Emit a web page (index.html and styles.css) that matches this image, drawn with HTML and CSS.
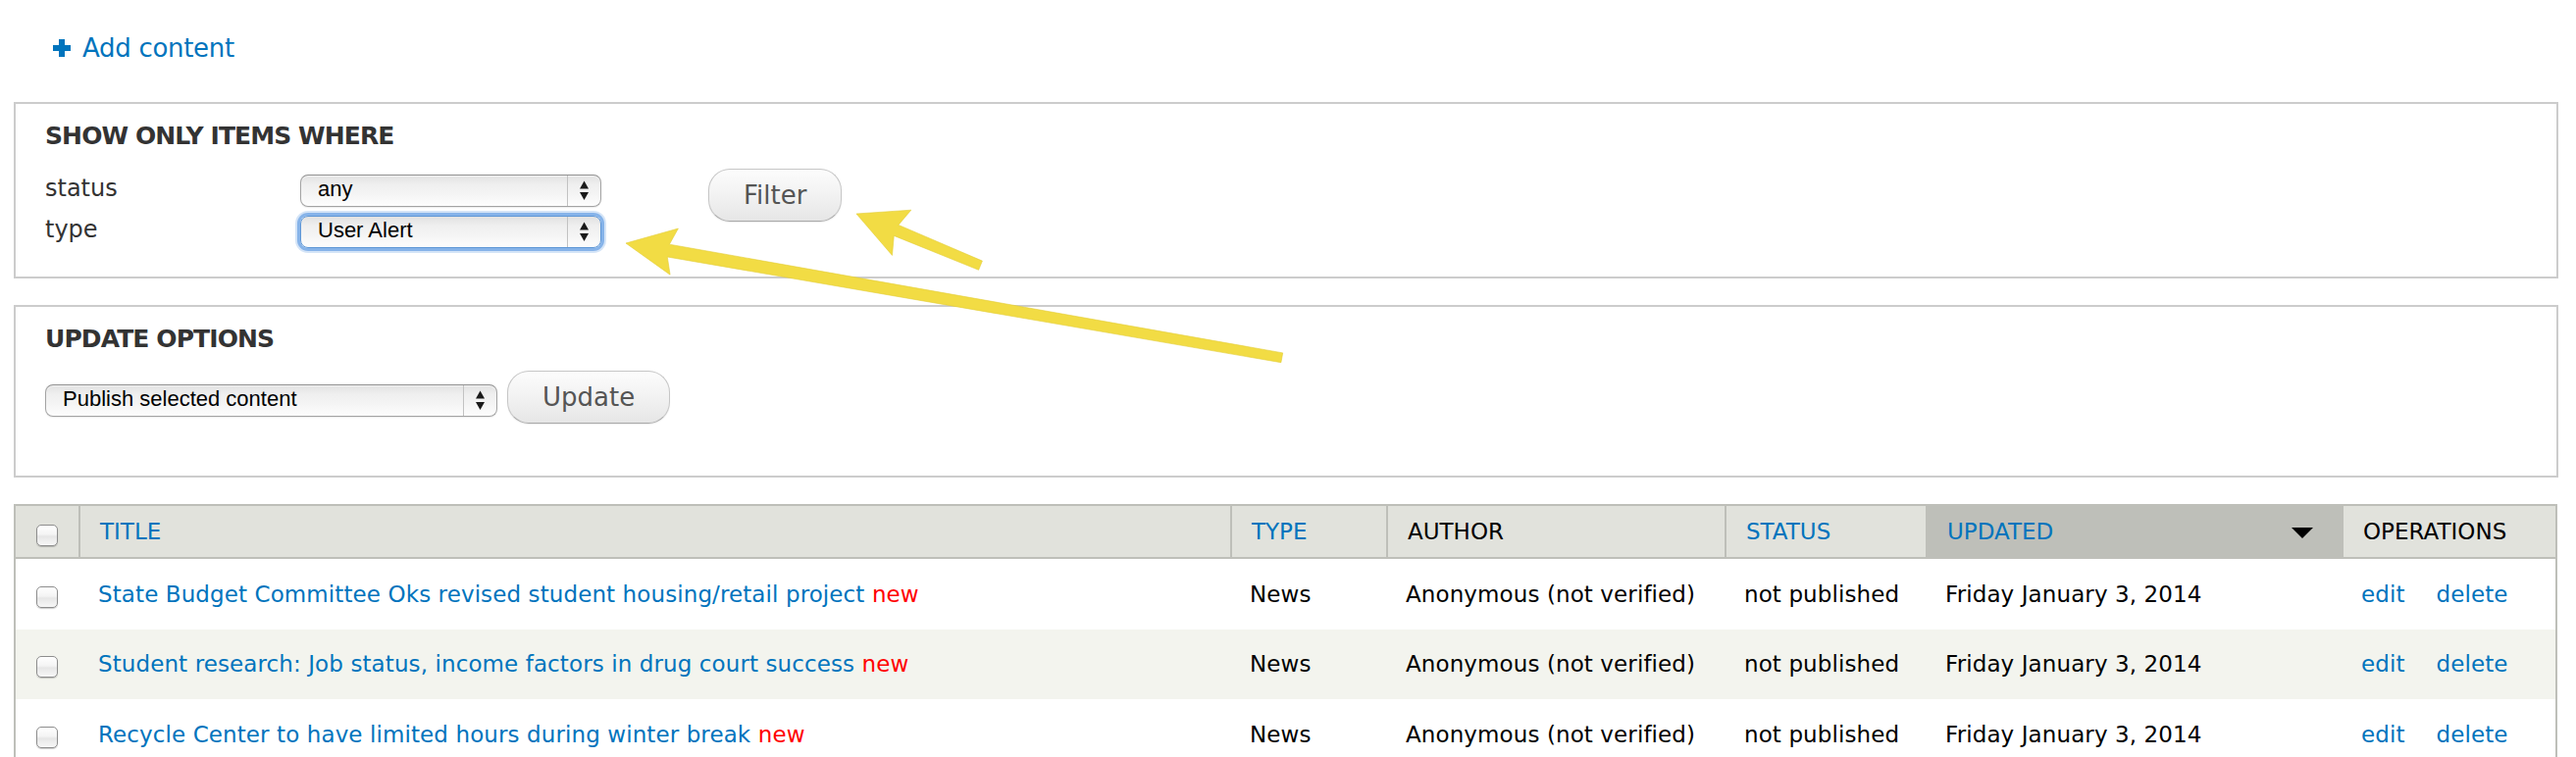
FILE: index.html
```html
<!DOCTYPE html>
<html lang="en">
<head>
<meta charset="utf-8">
<title>Content</title>
<link rel="stylesheet" href="styles.css">
</head>
<body>
<div class="page">
  <ul class="action-links">
    <li><a class="add-link" href="#"><svg class="plus" width="18" height="18" viewBox="0 0 18 18"><path d="M6 0h6v6h6v6h-6v6H6v-6H0V6h6z" fill="#0074bd"/></svg>Add content</a></li>
  </ul>

  <div class="box filter-box">
    <h2 class="box-title">SHOW ONLY ITEMS WHERE</h2>
    <div class="filter-body">
      <div class="filter-rows">
        <div class="filter-row">
          <label class="filter-label">status</label>
          <div class="select"><span class="select-text">any</span><span class="select-arrows"><svg width="11" height="21" viewBox="0 0 11 21"><polygon points="1,8.5 5.5,0.5 10,8.5" fill="#1a1a1a"/><polygon points="1,12 10,12 5.5,20" fill="#1a1a1a"/></svg></span></div>
        </div>
        <div class="filter-row">
          <label class="filter-label">type</label>
          <div class="select focused"><span class="select-text">User Alert</span><span class="select-arrows"><svg width="11" height="21" viewBox="0 0 11 21"><polygon points="1,8.5 5.5,0.5 10,8.5" fill="#1a1a1a"/><polygon points="1,12 10,12 5.5,20" fill="#1a1a1a"/></svg></span></div>
        </div>
      </div>
      <button class="btn filter-btn" type="button">Filter</button>
    </div>
  </div>

  <div class="box update-box">
    <h2 class="box-title">UPDATE OPTIONS</h2>
    <div class="update-body">
      <div class="select update-select"><span class="select-text">Publish selected content</span><span class="select-arrows"><svg width="11" height="21" viewBox="0 0 11 21"><polygon points="1,8.5 5.5,0.5 10,8.5" fill="#1a1a1a"/><polygon points="1,12 10,12 5.5,20" fill="#1a1a1a"/></svg></span></div>
      <button class="btn update-btn" type="button">Update</button>
    </div>
  </div>

  <table class="content-table">
    <thead>
      <tr>
        <th class="cb-col"><input class="cb" type="checkbox"></th>
        <th class="col-title"><a href="#">TITLE</a></th>
        <th class="col-type"><a href="#">TYPE</a></th>
        <th class="col-author">AUTHOR</th>
        <th class="col-status"><a href="#">STATUS</a></th>
        <th class="col-updated sorted"><span class="sort-icon"><svg width="22" height="11" viewBox="0 0 22 11"><polygon points="0,0 22,0 11,11" fill="#000"/></svg></span><a href="#">UPDATED</a></th>
        <th class="col-ops">OPERATIONS</th>
      </tr>
    </thead>
    <tbody>
      <tr class="odd">
        <td class="cb-col"><input class="cb" type="checkbox"></td>
        <td><a href="#">State Budget Committee Oks revised student housing/retail project</a> <span class="marker">new</span></td>
        <td>News</td>
        <td>Anonymous (not verified)</td>
        <td>not published</td>
        <td>Friday January 3, 2014</td>
        <td><a class="op" href="#">edit</a><a href="#">delete</a></td>
      </tr>
      <tr class="even">
        <td class="cb-col"><input class="cb" type="checkbox"></td>
        <td><a href="#">Student research: Job status, income factors in drug court success</a> <span class="marker">new</span></td>
        <td>News</td>
        <td>Anonymous (not verified)</td>
        <td>not published</td>
        <td>Friday January 3, 2014</td>
        <td><a class="op" href="#">edit</a><a href="#">delete</a></td>
      </tr>
      <tr class="odd">
        <td class="cb-col"><input class="cb" type="checkbox"></td>
        <td><a href="#">Recycle Center to have limited hours during winter break</a> <span class="marker">new</span></td>
        <td>News</td>
        <td>Anonymous (not verified)</td>
        <td>not published</td>
        <td>Friday January 3, 2014</td>
        <td><a class="op" href="#">edit</a><a href="#">delete</a></td>
      </tr>
    </tbody>
  </table>
</div>

<svg class="annotations" width="2626" height="772" viewBox="0 0 2626 772">
  <g class="arrow">
    <polygon points="873,218 928.8,214.2 915.9,229.4 1001.4,266.1 997.6,275.3 911.3,240.4 909.5,260.4"/>
    <polygon points="638,248 691.4,233 682.4,249.2 1307.7,359.9 1305.9,369.7 680.3,262 683.1,280.2"/>
  </g>
</svg>
</body>
</html>
```

FILE: styles.css
```css
html, body {
  margin: 0;
  padding: 0;
  background: #fff;
  overflow: hidden;
}

body {
  position: relative;
  font-family: "DejaVu Sans", "Liberation Sans", sans-serif;
  color: #333;
}

a {
  color: #0074bd;
  text-decoration: none;
}

.page {
  width: 2594px;
  margin-left: 14px;
  padding-top: 34px;
}

/* Action links */
.action-links {
  list-style: none;
  margin: 0 0 40px;
  padding: 0 0 0 40px;
  height: 30px;
  line-height: 30px;
}

.add-link {
  font-size: 26px;
  letter-spacing: -0.3px;
}

.plus {
  vertical-align: baseline;
  margin-right: 12px;
}

/* Boxes */
.box {
  border: 2px solid #ccc;
  padding: 18px 30px 29px;
  margin-bottom: 27px;
}

.update-box {
  padding-bottom: 53px;
}

.box-title {
  margin: 0;
  font-size: 25px;
  font-weight: bold;
  line-height: 30px;
  letter-spacing: -0.9px;
  color: #333;
}

.filter-body {
  display: flex;
  align-items: flex-start;
  margin-top: 24px;
}

.filter-rows {
  display: flex;
  flex-direction: column;
  gap: 9px;
}

.filter-row {
  display: flex;
  align-items: baseline;
}

.filter-label {
  width: 260px;
  font-size: 24px;
  color: #333;
}

/* Select widgets */
.select {
  display: flex;
  width: 307px;
  height: 33px;
  box-sizing: border-box;
  border: 1px solid #a3a3a3;
  border-top-color: #8f8f8f;
  border-radius: 8px;
  background: linear-gradient(to bottom, #e2e2e2 0%, #efefef 30%, #f3f3f3 55%, #fdfdfd 100%);
  box-shadow: inset 0 1px 1px rgba(255, 255, 255, 0.6), 0 1px 1px rgba(0, 0, 0, 0.08);
}

.select.focused {
  border-color: #5f97d6;
  box-shadow: 0 0 0 3px rgba(120, 170, 230, 0.85), 0 0 0 5px rgba(160, 195, 238, 0.45);
}

.select-text {
  flex: 1;
  padding-left: 17px;
  font-family: "Liberation Sans", Arial, sans-serif;
  font-size: 22px;
  line-height: 27px;
  color: #000;
  white-space: nowrap;
}

.select-arrows {
  width: 33px;
  border-left: 1px solid #c2c2c2;
  display: flex;
  align-items: center;
  justify-content: center;
}

.update-body {
  display: flex;
  align-items: flex-start;
  gap: 10px;
  margin-top: 17px;
}

.update-select {
  width: 461px;
  margin-top: 14px;
}

/* Buttons */
.btn {
  height: 54px;
  padding: 0 35px;
  font-family: "DejaVu Sans", sans-serif;
  font-size: 26px;
  color: #555;
  border: 1px solid #c6c6c6;
  border-bottom-color: #a9a9a9;
  border-radius: 22px;
  background: linear-gradient(to bottom, #fcfcfc 0%, #f2f2f2 50%, #e6e6e6 100%);
  box-shadow: 0 1px 1px rgba(0, 0, 0, 0.08);
}

.filter-btn {
  margin-left: 109px;
  margin-top: -6px;
}

/* Table */
.content-table {
  width: 2593px;
  border-collapse: separate;
  border-spacing: 0;
  table-layout: fixed;
  border: 2px solid #bebfb9;
  border-bottom: none;
  font-size: 23px;
}

.content-table th {
  height: 52px;
  padding: 0 20px;
  line-height: 52px;
  background: #e1e2dc;
  border-left: 2px solid #bebfb9;
  border-bottom: 2px solid #bebfb9;
  font-weight: normal;
  text-align: left;
  color: #000;
  white-space: nowrap;
}

.content-table th.cb-col {
  width: 64px;
  padding: 0;
  border-left: none;
  text-align: center;
}

.content-table th.col-title { width: 1132px; }
.content-table th.col-type { width: 117px; }
.content-table th.col-author { width: 303px; }
.content-table th.col-status { width: 163px; }
.content-table th.col-updated { width: 382px; }
.content-table th.col-ops { width: 176px; }

.content-table th.sorted {
  background: #bebfb9;
}

.sort-icon {
  float: right;
  margin-right: 9px;
  height: 52px;
  display: flex;
  align-items: center;
  padding-top: 3px;
  box-sizing: border-box;
}

.content-table td {
  height: 71.5px;
  padding: 0 20px;
  color: #000;
  white-space: nowrap;
  letter-spacing: 0.1px;
}

.content-table td.cb-col {
  padding: 0;
  text-align: center;
}

.content-table tr.even td {
  background: #f3f4ee;
}

.marker {
  color: #f00;
}

.op {
  margin-right: 32px;
}

.cb {
  appearance: none;
  -webkit-appearance: none;
  width: 22px;
  height: 22px;
  margin: 4px 0 0;
  vertical-align: middle;
  border: 1px solid #8d8d8d;
  border-radius: 5px;
  background: linear-gradient(to bottom, #ffffff 0%, #f4f4f4 45%, #e6e6e6 55%, #f7f7f7 100%);
  box-shadow: 0 1px 1px rgba(0, 0, 0, 0.2);
}

/* Annotation overlay */
.annotations {
  position: absolute;
  top: 0;
  left: 0;
  pointer-events: none;
}

.arrow polygon {
  fill: #f2dc44;
  stroke: #e3cc36;
  stroke-width: 0.6;
  stroke-linejoin: round;
}
```
